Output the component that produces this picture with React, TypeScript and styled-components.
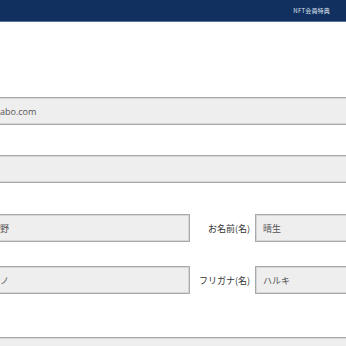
import React from "react";
import styled, { createGlobalStyle } from "styled-components";

const Global = createGlobalStyle`
  html, body { margin: 0; padding: 0; background: #ffffff; overflow: hidden; }
  body { font-family: "Open Sans", "Noto Sans CJK JP", sans-serif; }
  * { box-sizing: border-box; }
`;

const Header = styled.header`
  height: 22px;
  background: #11305f;
  border-bottom: 1px solid #5a7399;
  display: flex;
  align-items: center;
  justify-content: flex-end;
  padding-right: 16px;
`;

const HeaderLink = styled.span`
  font-family: "Noto Sans CJK JP", sans-serif;
  font-size: 6px;
  color: #dde4ef;
  letter-spacing: 0.2px;
`;

const Form = styled.main`
  margin-left: -8px;
  width: calc(100% + 40px);
  display: flex;
  flex-direction: column;
`;

const Row = styled.div<{ $gap: number }>`
  margin-top: ${(p) => p.$gap}px;
  height: 28px;
  display: flex;
`;

const NameRow = styled.div<{ $gap: number }>`
  margin-top: ${(p) => p.$gap}px;
  height: 28px;
  display: grid;
  grid-template-columns: 198px 65px 1fr;
  align-items: center;
`;

const Field = styled.input`
  width: 100%;
  height: 28px;
  margin: 0;
  padding: 0 0 0 7px;
  background: #eeeeee;
  border: 1px solid #a9a9a9;
  box-shadow: inset 0 0 0 1px #d6d6d6;
  border-radius: 0;
  font-family: "Open Sans", "Noto Sans CJK JP", sans-serif;
  font-size: 9px;
  color: #555555;
  outline: none;
`;

const Label = styled.label`
  font-family: "Noto Sans CJK JP", sans-serif;
  font-size: 9px;
  color: #333333;
  text-align: right;
  padding-right: 5px;
  white-space: nowrap;
`;

export default function App() {
  return (
    <>
      <Global />
      <Header>
        <HeaderLink>NFT会員特典</HeaderLink>
      </Header>
      <Form>
        <Row $gap={75}>
          <Field readOnly value="abo.com" />
        </Row>
        <Row $gap={30}>
          <Field readOnly value="" />
        </Row>
        <NameRow $gap={31}>
          <Field readOnly value="野" />
          <Label>お名前(名)</Label>
          <Field readOnly value="晴生" />
        </NameRow>
        <NameRow $gap={24}>
          <Field readOnly value="ノ" />
          <Label>フリガナ(名)</Label>
          <Field readOnly value="ハルキ" />
        </NameRow>
        <Row $gap={43}>
          <Field readOnly value="" />
        </Row>
      </Form>
    </>
  );
}
